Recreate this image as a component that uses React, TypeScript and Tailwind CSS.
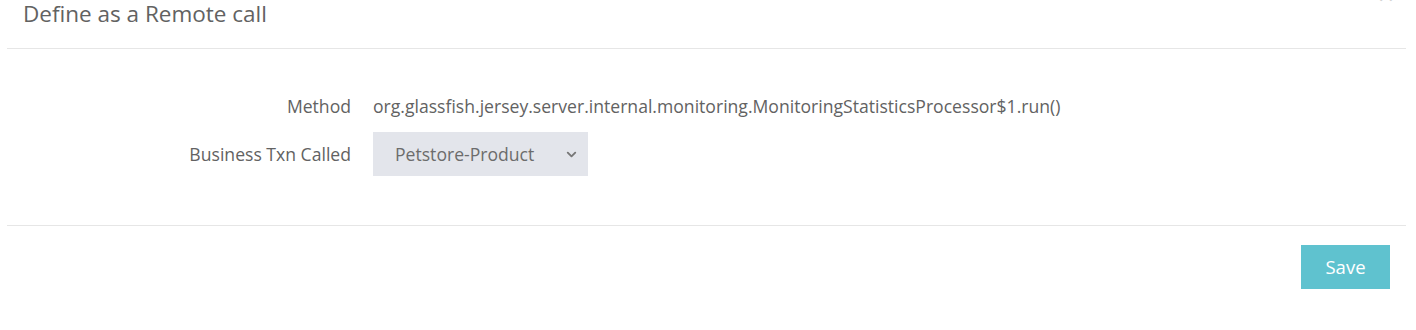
import React from "react";
import { ChevronDown } from "lucide-react";

export default function App() {
  return (
    <div
      className="relative h-[330px] w-full overflow-hidden bg-white text-[#626262]"
      style={{ fontFamily: '"Open Sans", "Segoe UI", sans-serif' }}
    >
      {/* close, mostly cut off at the top */}
      <button className="absolute right-[22px] top-[-20px] text-[28px] leading-none text-[#cfcfcf]">
        ×
      </button>

      {/* header */}
      <div className="ml-[7px] mr-[10px] h-[49px] border-b border-[#e6e6e6] pl-[16px]">
        <h4 className="text-[22.5px] leading-[27px] font-normal text-[#626262]">
          Define as a Remote call
        </h4>
      </div>

      {/* body */}
      <div className="ml-[7px] mr-[10px] h-[177px] border-b border-[#e6e6e6] pt-[40px] text-[17.6px]">
        <div className="flex h-[34px] items-center gap-[22px]">
          <label className="w-[344px] text-right">Method</label>
          <span>
            org.glassfish.jersey.server.internal.monitoring.MonitoringStatisticsProcessor$1.run()
          </span>
        </div>
        <div className="mt-[9px] flex items-center gap-[22px]">
          <label className="w-[344px] text-right">Business Txn Called</label>
          <div className="flex h-[44px] w-[215px] items-center justify-between bg-[#e3e5eb] pl-[22px] pr-[9px] text-[#6c6c6c]">
            <span>Petstore-Product</span>
            <ChevronDown size={15} strokeWidth={3} className="text-[#777]" />
          </div>
        </div>
      </div>

      {/* footer */}
      <div className="mr-[26px] flex justify-end pt-[19px]">
        <button className="h-[44px] w-[89px] bg-[#5fc2cf] text-[18.5px] text-white">
          Save
        </button>
      </div>
    </div>
  );
}
